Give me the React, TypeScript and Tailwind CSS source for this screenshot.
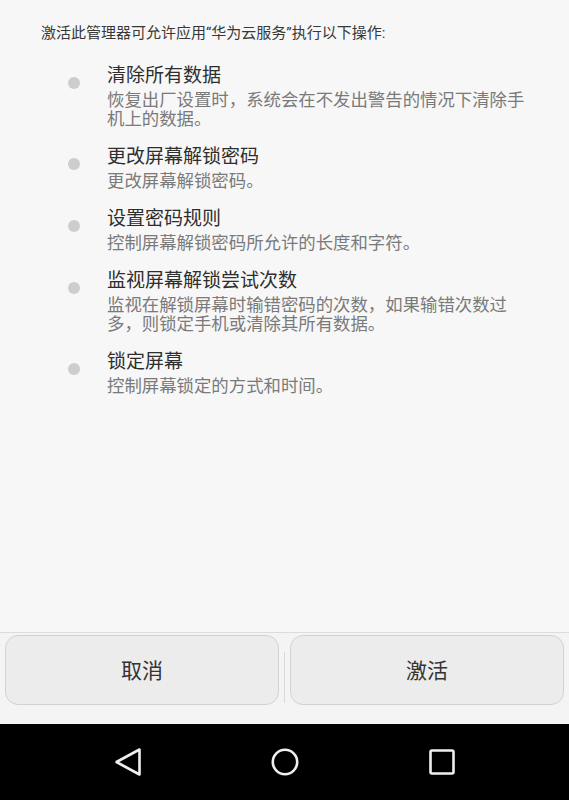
const policies = [
  {
    title: "清除所有数据",
    desc: "恢复出厂设置时，系统会在不发出警告的情况下清除手机上的数据。",
  },
  { title: "更改屏幕解锁密码", desc: "更改屏幕解锁密码。" },
  { title: "设置密码规则", desc: "控制屏幕解锁密码所允许的长度和字符。" },
  {
    title: "监视屏幕解锁尝试次数",
    desc: "监视在解锁屏幕时输错密码的次数，如果输错次数过多，则锁定手机或清除其所有数据。",
  },
  { title: "锁定屏幕", desc: "控制屏幕锁定的方式和时间。" },
];

const NavBar = () => (
  <div className="h-[76px] bg-black flex items-center justify-center gap-[129px]">
    <svg width="28" height="30" viewBox="0 0 28 30" fill="none">
      <path
        d="M2.5 15 L25.5 2.5 L25.5 27.5 Z"
        stroke="#efefef"
        strokeWidth="2.6"
        strokeLinejoin="round"
      />
    </svg>
    <svg width="28" height="28" viewBox="0 0 28 28" fill="none">
      <circle cx="14" cy="14" r="12.2" stroke="#efefef" strokeWidth="2.6" />
    </svg>
    <svg width="28" height="28" viewBox="0 0 28 28" fill="none">
      <rect
        x="2.5"
        y="2.5"
        width="23"
        height="23"
        rx="1.5"
        stroke="#efefef"
        strokeWidth="2.6"
      />
    </svg>
  </div>
);

export default function App() {
  return (
    <div className="h-screen flex flex-col bg-[#f7f7f7] font-['Noto_Sans_CJK_SC',sans-serif]">
      <div className="flex-1 pt-[22px]">
        <p className="pl-[41px] text-[15px] leading-[20px] text-[#383838]">
          激活此管理器可允许应用
          <span className="font-['Roboto',sans-serif]">“</span>
          华为云服务
          <span className="font-['Roboto',sans-serif]">”</span>
          执行以下操作<span className="font-['Roboto',sans-serif]">:</span>
        </p>
        <ul className="mt-[18px] flex flex-col gap-[15px]">
          {policies.map((p) => (
            <li key={p.title} className="flex pl-[68px]">
              <span className="mt-[15.5px] w-[12px] h-[12px] rounded-full bg-[#cdcdcd] shrink-0" />
              <div className="ml-[27px] w-[428px]">
                <div className="text-[19px] leading-[26px] text-[#2e2e2e]">
                  {p.title}
                </div>
                <div className="mt-[2px] text-[17.4px] leading-[19px] text-[#7a7a7a]">
                  {p.desc}
                </div>
              </div>
            </li>
          ))}
        </ul>
      </div>

      <div className="h-[92px] border-t border-[#dcdcdc] bg-[#f4f4f4] flex items-start px-[5px] pt-[2px]">
        <button className="flex-1 h-[70px] rounded-[13px] border border-[#d2d2d2] bg-[#ececec] text-[21px] text-[#333333]">
          取消
        </button>
        <div className="w-px h-[51px] mt-[17px] mx-[5px] bg-[#d8d8d8]" />
        <button className="flex-1 h-[70px] rounded-[13px] border border-[#d2d2d2] bg-[#ececec] text-[21px] text-[#333333]">
          激活
        </button>
      </div>

      <NavBar />
    </div>
  );
}
